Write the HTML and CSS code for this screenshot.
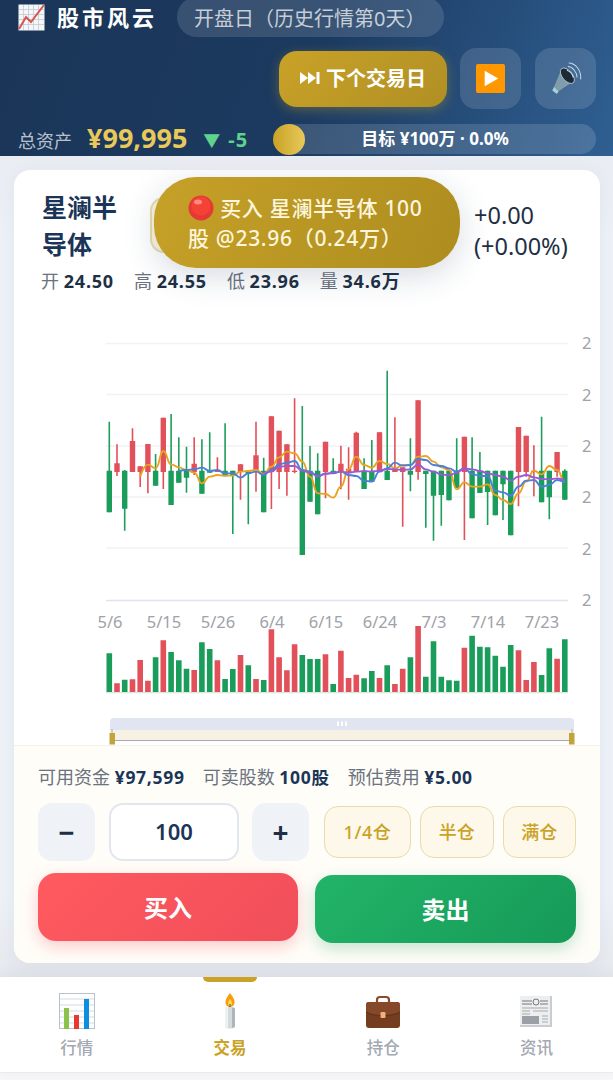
FILE: index.html
```html
<!DOCTYPE html>
<html lang="zh-CN">
<head>
<meta charset="utf-8">
<title>股市风云</title>
<link rel="stylesheet" href="styles.css">
</head>
<body>
<div class="app">
  <header class="top">
    <div class="top-row1">
      <div class="brand">
        <svg class="brand-icon" viewBox="0 0 27 27"><rect x=".5" y=".5" width="26" height="26" fill="#f4f6f8"/><path d="M1 5.500h25M1 10.500h25M1 15.500h25M1 20.500h25M5.500 1v25M10.500 1v25M15.500 1v25M20.500 1v25" stroke="#b9c4cf" stroke-width=".7" fill="none"/><path d="M1 25 8 13 13 18 26 1" stroke="#d9534f" stroke-width="2" fill="none"/></svg>
        <span class="brand-name">股市风云</span>
      </div>
      <div class="day-pill">开盘日（历史行情第0天）</div>
    </div>
    <div class="top-row2">
      <button class="next-btn"><svg class="next-icon" viewBox="0 0 20 12"><path d="M0 0 8 6 0 12ZM8 0 16 6 8 12ZM16.500 0h3v12h-3Z" fill="#fff"/></svg>下个交易日</button>
      <button class="sq-btn"><svg class="play-icon" viewBox="0 0 30 30"><rect width="30" height="30" rx="2" fill="#ff9800"/><path d="M9 7 23 15 9 23Z" fill="#fff"/></svg></button>
      <button class="sq-btn"><svg class="sound-icon" viewBox="0 0 34 36"><path d="M4 27 12 8c5-1 12 5 13 13L9 32Z" fill="#7f9dab"/><ellipse cx="18.500" cy="15" rx="5.500" ry="10" transform="rotate(-40 18.500 15)" fill="#1e2a38" stroke="#a9c3cd"/><path d="M4 27l5 5-2 3-5-4Z" fill="#a9d0d8"/><path d="M18 9c3 1 6 4 7 8M19 5c5 0 10 6 10 12M20 1c7 0 14 8 13 18" stroke="#c9d8e2" stroke-width="1.100" fill="none"/></svg></button>
    </div>
    <div class="top-row3">
      <span class="asset-label">总资产</span>
      <span class="asset-value">¥99,995</span>
      <span class="asset-delta"><span class="delta-arrow">▼</span>-5</span>
      <div class="goal">
        <span class="goal-dot"></span>
        <span class="goal-text">目标 ¥100万 · 0.0%</span>
      </div>
    </div>
  </header>

  <main class="main">
    <section class="card">
      <div class="stock-head">
        <div class="stock-name">星澜半导体</div>
        <div class="stock-tag"></div>
        <div class="stock-change">+0.00<br>(+0.00%)</div>
      </div>
      <div class="ohlc">
        <span class="ohlc-item">开 <b>24.50</b></span>
        <span class="ohlc-item">高 <b>24.55</b></span>
        <span class="ohlc-item">低 <b>23.96</b></span>
        <span class="ohlc-item">量 <b>34.6万</b></span>
      </div>

      <svg class="chart" viewBox="14 330 586 415">
        <path class="grid" d="M106 343.500H568M106 394.500H568M106 446H568M106 497H568M106 548H568"/>
        <path class="grid-base" d="M106 600.500H568"/>
        <g class="axis-y">
          <text x="582" y="349">2</text><text x="582" y="401">2</text><text x="582" y="452">2</text>
          <text x="582" y="503">2</text><text x="582" y="555">2</text><text x="582" y="606">2</text>
        </g>
        <g class="axis-x">
          <text x="110" y="628">5/6</text><text x="164" y="628">5/15</text><text x="218" y="628">5/26</text>
          <text x="272" y="628">6/4</text><text x="326" y="628">6/15</text><text x="380" y="628">6/24</text>
          <text x="434" y="628">7/3</text><text x="488" y="628">7/14</text><text x="542" y="628">7/23</text>
        </g>
        <g transform="translate(0 330) scale(1 .33333)">
          <path class="wick-g" d="M109.300 275V547M124.700 420V602M155.600 372V467M171.100 252V525M178.800 322V458M186.500 350V488M201.900 328V491M209.700 307V428M225.100 280V439M232.800 422V612M248.300 422V583M263.700 383V547M302.300 228V675M310 348V515M317.700 370V553M333.200 385V432M364.100 385V477M371.800 330V455M387.200 122V450M410.400 325V484M425.800 422V593M433.500 422V632M441.300 422V587M449 422V511M456.700 325V473M472.100 322V565M479.900 366V489M487.600 422V585M495.300 422V556M503 422V570M510.700 422V616M541.600 260V517M549.300 422V568M564.800 418V509"/>
          <path class="wick-r" d="M117 343V438M132.500 295V426M140.200 409V471M147.900 342V490M163.300 263V477M194.200 322V435M217.400 382V426M240.500 403V509M256 275V485M271.400 259V537M279.100 302V477M286.900 343V497M294.600 205V430M325.500 335V505M340.900 347V478M348.600 352V509M356.300 305V426M379.500 307V426M394.900 262V426M402.700 412V590M418.100 211V449M464.400 320V630M518.500 291V529M526.200 317V440M533.900 346V499M557.100 366V440"/>
          <path class="body-g" d="M109.300 422V547M124.700 422V536M155.600 422V467M171.100 422V525M178.800 422V458M186.500 422V443M201.900 422V491M209.700 420V428M225.100 422V439M232.800 422V438M248.300 422V430M263.700 422V547M302.300 422V675M310 422V515M317.700 422V553M333.200 422V432M364.100 422V477M371.800 422V455M387.200 422V450M410.400 422V434M425.800 422V432M433.500 422V497M441.300 422V495M449 422V511M456.700 422V473M472.100 422V565M479.900 422V489M487.600 422V486M495.300 422V556M503 422V463M510.700 422V616M541.600 422V517M549.300 422V502M564.800 422V509"/>
          <path class="body-r" d="M117 400V426M132.500 333V426M140.200 409V426M147.900 342V426M163.300 263V426M194.200 401V426M217.400 420V426M240.500 403V426M256 376V426M271.400 259V426M279.100 302V426M286.900 343V426M294.600 422V426M325.500 335V426M340.900 401V426M348.600 416V426M356.300 308V426M379.500 307V426M394.900 415V426M402.700 412V426M418.100 211V426M464.400 320V426M518.500 291V426M526.200 317V426M533.900 422V426M557.100 366V426"/>
          <path class="ma ma-gold" d="M140.200 440S144 404 147.900 404S151.700 415 155.600 415S159.400 363 163.300 363S167.200 403 171.100 403S174.900 412 178.800 412S182.600 420 186.500 420S190.300 428 194.200 428S198 460 201.900 460S205.800 440 209.700 440S213.500 435 217.400 435S221.200 437 225.100 437S228.900 437 232.800 437S236.600 425 240.500 425S244.400 423 248.300 423S252.100 420 256 420S259.800 432 263.700 432S267.500 410 271.400 410S275.200 382 279.100 382S283 365 286.900 365S290.700 370 294.600 370S298.400 395 302.300 395S306.100 440 310 440S313.800 490 317.700 490S321.600 492 325.500 492S329.300 503 333.200 503S337 470 340.900 470S344.700 418 348.600 418S352.400 380 356.300 380S360.200 405 364.100 405S367.900 413 371.800 413S375.600 393 379.500 393S383.300 402 387.200 402S391 415 394.900 415S398.800 405 402.700 405S406.500 405 410.400 405S414.200 380 418.100 380S421.900 378 425.800 378S429.600 395 433.500 395S437.400 412 441.300 412S445.100 420 449 420S452.800 478 456.700 478S460.500 457 464.400 457S468.200 470 472.100 470S476 470 479.900 470S483.700 463 487.600 463S491.400 495 495.300 495S499.100 510 503 510S506.800 522 510.700 522S514.600 490 518.500 490S522.300 455 526.200 455S530 422 533.900 422S537.700 433 541.600 433S545.400 408 549.300 408S553.200 420 557.100 420S560.900 455 564.800 455"/>
          <path class="ma ma-blue" d="M178.800 423S182.600 420 186.500 420S190.300 418 194.200 418S198 413 201.900 413S205.800 423 209.700 423S213.500 420 217.400 420S221.200 430 225.100 430S228.900 430 232.800 430S236.600 443 240.500 443S244.400 430 248.300 430S252.100 425 256 425S259.800 435 263.700 435S267.500 420 271.400 420S275.200 403 279.100 403S283 398 286.900 398S290.700 393 294.600 393S298.400 420 302.300 420S306.100 425 310 425S313.800 440 317.700 440S321.600 430 325.500 430S329.300 430 333.200 430S337 425 340.900 425S344.700 435 348.600 435S352.400 438 356.300 438S360.200 452 364.100 452S367.900 455 371.800 455S375.600 425 379.500 425S383.300 415 387.200 415S391 398 394.900 398S398.800 407 402.700 407S406.500 405 410.400 405S414.200 387 418.100 387S421.900 390 425.800 390S429.600 405 433.500 405S437.400 408 441.300 408S445.100 415 449 415S452.800 425 456.700 425S460.500 415 464.400 415S468.200 432 472.100 432S476 438 479.900 438S483.700 438 487.600 438S491.400 482 495.300 482S499.100 487 503 487S506.800 497 510.700 497S514.600 470 518.500 470S522.300 452 526.200 452S530 450 533.900 450S537.700 470 541.600 470S545.400 465 549.300 465S553.200 450 557.100 450S560.900 455 564.800 455"/>
          <path class="ma ma-purple" d="M263.700 432S267.500 425 271.400 425S275.200 410 279.100 410S283 408 286.900 408S290.700 408 294.600 408S298.400 422 302.300 422S306.100 428 310 428S313.800 438 317.700 438S321.600 432 325.500 432S329.300 428 333.200 428S337 425 340.900 425S344.700 428 348.600 428S352.400 425 356.300 425S360.200 423 364.100 423S367.900 425 371.800 425S375.600 422 379.500 422S383.300 417 387.200 417S391 418 394.900 418S398.800 420 402.700 420S406.500 418 410.400 418S414.200 403 418.100 403S421.900 418 425.800 418S429.600 425 433.500 425S437.400 433 441.300 433S445.100 436 449 436S452.800 428 456.700 428S460.500 415 464.400 415S468.200 418 472.100 418S476 423 479.900 423S483.700 430 487.600 430S491.400 435 495.300 435S499.100 440 503 440S506.800 452 510.700 452S514.600 440 518.500 440S522.300 435 526.200 435S530 442 533.900 442S537.700 447 541.600 447S545.400 448 549.300 448S553.200 445 557.100 445S560.900 450 564.800 450"/>
        </g>
        <path class="vol-base" d="M106 692.500H568"/>
        <g transform="translate(0 590) scale(1 .33333)">
          <path class="vol-g" d="M109.300 190V306M124.700 269V306M155.600 202V306M171.100 186V306M178.800 211V306M186.500 236V306M201.900 157V306M209.700 177V306M225.100 267V306M232.800 237V306M248.300 226V306M263.700 270V306M302.300 195V306M310 207V306M317.700 207V306M333.200 282V306M364.100 265V306M371.800 243V306M387.200 226V306M410.400 202V306M425.800 260V306M433.500 154V306M441.300 260V306M449 271V306M456.700 272V306M472.100 137V306M479.900 170V306M487.600 172V306M495.300 197V306M503 230V306M510.700 165V306M541.600 255V306M549.300 175V306M564.800 148V306"/>
          <path class="vol-r" d="M117 280V306M132.500 268V306M140.200 210V306M147.900 272V306M163.300 151V306M194.200 240V306M217.400 211V306M240.500 195V306M256 267V306M271.400 118V306M279.100 202V306M286.900 241V306M294.600 163V306M325.500 193V306M340.900 182V306M348.600 264V306M356.300 254V306M379.500 264V306M394.900 282V306M402.700 236V306M418.100 108V306M464.400 173V306M518.500 181V306M526.200 270V306M533.900 216V306M557.100 206V306"/>
        </g>
        <path class="zoom-track" d="M110 730V722a4 4 0 0 1 4-4H570a4 4 0 0 1 4 4V730Z"/>
        <rect class="zoom-fill" x="110" y="730" width="464" height="10.500"/>
        <path class="zoom-line" d="M110 740.500H574"/>
        <path class="zoom-grip" d="M338 721.500V726M342 721.500V726M346 721.500V726"/>
        <path class="zoom-stem" d="M112 729V733M572 729V733"/>
        <rect class="zoom-handle" x="109.500" y="733" width="5.500" height="11.500"/>
        <rect class="zoom-handle" x="569" y="733" width="5.500" height="11.500"/>
      </svg>

      <section class="trade">
        <div class="funds">
          <span class="fund">可用资金 <b>¥97,599</b></span>
          <span class="fund">可卖股数 <b>100股</b></span>
          <span class="fund">预估费用 <b>¥5.00</b></span>
        </div>
        <div class="qty-row">
          <button class="step">−</button>
          <div class="qty">100</div>
          <button class="step">+</button>
          <button class="pos pos-wide">1/4仓</button>
          <button class="pos">半仓</button>
          <button class="pos">满仓</button>
        </div>
        <div class="actions">
          <button class="act act-buy">买入</button>
          <button class="act act-sell">卖出</button>
        </div>
      </section>

      <div class="toast"><svg class="toast-dot" viewBox="0 0 26 26"><circle cx="13" cy="13" r="12.500" fill="#e53935"/><circle cx="13" cy="11" r="9.500" fill="#f44336"/><ellipse cx="10" cy="7" rx="4" ry="2.500" fill="#ff8a80"/></svg> 买入 星澜半导体 100股 @23.96（0.24万）</div>
    </section>
  </main>

  <nav class="tabs">
    <div class="tab">
      <svg class="tab-icon" viewBox="0 0 36 36"><rect x=".5" y=".5" width="35" height="35" fill="#fff" stroke="#b8c2cc"/><path d="M1 6h34M1 12h34M1 18h34M1 24h34M1 30h34" stroke="#d5dbe0"/><rect x="5" y="15" width="5" height="21" fill="#8bc34a"/><rect x="15" y="22" width="5" height="14" fill="#e53935"/><rect x="25" y="6" width="5" height="30" fill="#0d8ee0"/></svg>
      <span>行情</span>
    </div>
    <div class="tab tab-on">
      <svg class="tab-icon" viewBox="0 0 36 36"><path d="M18 0c3 4 4.500 6 4.500 9 0 3-2 5-4.500 5s-4.500-2-4.500-5c0-3 1.500-5 4.500-9Z" fill="#f59e0b"/><path d="M18 6c1.500 2 2 3 2 4.500 0 1.500-1 2.500-2 2.500s-2-1-2-2.500c0-1.500.5-2.500 2-4.500Z" fill="#ffd54f"/><rect x="17.500" y="11" width="1" height="4" fill="#555"/><path d="M13 15c3-1.500 7-1.500 10 0v19c-3 2-7 2-10 0Z" fill="#d5dadd"/><path d="M13 15c1-.5 2-1 3-1v21c-1 0-2-.500-3-1Z" fill="#eef1f2"/><path d="M20 14.500l3 .5v19l-3 1Z" fill="#aeb6ba"/></svg>
      <span>交易</span>
    </div>
    <div class="tab">
      <svg class="tab-icon" viewBox="0 0 36 36"><path d="M12 10V7a3 3 0 0 1 3-3h6a3 3 0 0 1 3 3v3" stroke="#8a4b2a" stroke-width="2.200" fill="none"/><rect x="1" y="9" width="34" height="26" rx="3" fill="#743d20"/><path d="M1 12a3 3 0 0 1 3-3h28a3 3 0 0 1 3 3v7c-5 3-11 3.500-17 3.500S6 22 1 19Z" fill="#85492a"/><path d="M1 19c5 3 11 3.500 17 3.500S30 22 35 19" stroke="#5a2f18" fill="none"/><rect x="15.500" y="19" width="5" height="6" rx="1" fill="#f0b27a"/></svg>
      <span>持仓</span>
    </div>
    <div class="tab">
      <svg class="tab-icon" viewBox="0 0 36 36"><rect x="2" y="3" width="32" height="31" fill="#c9cdd1"/><rect x="2" y="3" width="30" height="29" fill="#eceef0"/><path d="M4 8h10M22 8h8M4 11h10M22 11h8" stroke="#777" stroke-width="1.200"/><circle cx="18" cy="9" r="3" fill="none" stroke="#777"/><path d="M4 15h26M4 18h8M15 18h15M4 21h8" stroke="#aaa"/><rect x="4" y="23" width="17" height="8" fill="#9aa0a5"/><path d="M24 23h6M24 26h6M24 29h6" stroke="#aaa"/></svg>
      <span>资讯</span>
    </div>
  </nav>
  <div class="home-bar"></div>
</div>
</body>
</html>
```
FILE: styles.css
```css
* { box-sizing: border-box; }
html, body { margin: 0; padding: 0; }
body {
  font-family: "Noto Sans", "Noto Sans CJK SC", "DejaVu Sans", sans-serif;
  background: #f6f6f8;
  color: #1a2f47;
  overflow: hidden;
  text-spacing-trim: space-all;
}
button { font-family: inherit; border: 0; padding: 0; cursor: pointer; }
.app { width: 613px; height: 1080px; display: flex; flex-direction: column; }

/* header */
.top {
  height: 156px;
  flex: none;
  padding: 0 17px 0 18px;
  background: linear-gradient(110deg, #1a3557 0%, #1c3a60 50%, #2f5f92 100%);
  color: #fff;
}
.top-row1 { display: flex; align-items: center; height: 37px; }
.brand { display: flex; align-items: center; width: 159px; margin-top: -3px; }
.brand-icon { width: 27px; height: 27px; margin-right: 12px; }
.brand-name { font-size: 22px; font-weight: 700; letter-spacing: 3px; line-height: 1; }
.day-pill {
  width: 267px; height: 40px; margin-top: -3px;
  padding-left: 17px;
  display: flex; align-items: center;
  font-size: 20px; color: rgba(255,255,255,.72);
  background: rgba(255,255,255,.13);
  border-radius: 20px;
  white-space: nowrap;
}
.top-row2 { display: flex; justify-content: flex-end; align-items: center; gap: 14px; margin-top: 11px; height: 61px; }
.next-btn {
  width: 168px; height: 56px;
  margin-right: -1px;
  padding-bottom: 2px;
  display: flex; align-items: center; justify-content: center; gap: 6px;
  font-size: 20px; font-weight: 700; color: #fff;
  background: linear-gradient(135deg, #c9a227, #b08f24);
  border-radius: 18px;
  box-shadow: 0 3px 12px rgba(201,162,39,.35);
}
.next-icon { width: 20px; height: 12px; }
.sq-btn {
  width: 61px; height: 61px;
  display: flex; align-items: center; justify-content: center;
  background: rgba(255,255,255,.13);
  border-radius: 16px;
}
.play-icon { width: 29px; height: 29px; }
.sound-icon { width: 32px; height: 33px; }
.top-row3 { display: flex; align-items: center; height: 30px; margin-top: 15px; }
.asset-label { font-size: 18px; color: rgba(255,255,255,.7); width: 69px; margin-top: 1px; }
.asset-value { font-size: 27px; font-weight: 700; color: #e8c95a; line-height: 1; margin-top: -4px; }
.asset-delta { font-size: 20px; font-weight: 700; color: #5fd38d; margin-left: 16px; letter-spacing: 1px; }
.delta-arrow { margin-right: 7px; font-size: 17px; }
.goal {
  position: relative;
  margin-left: auto; width: 322px; height: 30px;
  display: flex; align-items: center; justify-content: center;
  background: rgba(255,255,255,.14);
  border-radius: 15px;
}
.goal-dot {
  position: absolute; left: -1px; top: 0;
  width: 32px; height: 31px; border-radius: 50%;
  background: linear-gradient(90deg, #c9a227, #e8c95a);
}
.goal-text { font-size: 17px; font-weight: 700; color: #fff; margin-top: -3px; }

/* main */
.main {
  height: 821px;
  flex: none;
  padding: 14px 13px 14px 14px;
  background: linear-gradient(180deg, #e9ecf2 0%, #eef2f8 10%, #eef2f8 90%, #e6e9ee 100%);
}
.card {
  position: relative;
  height: 793px;
  display: flex; flex-direction: column;
  background: #fff;
  border-radius: 16px;
  box-shadow: 0 4px 20px rgba(26,53,87,.06);
  overflow: hidden;
}
.stock-head { display: flex; padding: 19px 0 0 28px; height: 94px; }
.stock-name { width: 82px; font-size: 25px; font-weight: 700; line-height: 37px; color: #1a3557; }
.stock-tag {
  width: 150px; height: 56px; margin: 8px 0 0 26px;
  background: #fbf5e2; border: 2px solid #e8dcae; border-radius: 14px;
}
.stock-change { margin-left: 174px; font-size: 23.500px; line-height: 31px; color: #1f3044; margin-top: 11px; white-space: nowrap; }
.ohlc { display: flex; gap: 20px; padding-left: 27px; height: 24px; margin-top: 5px; font-size: 18px; line-height: 24px; color: #6b7280; white-space: nowrap; }
.ohlc b { color: #1f3044; letter-spacing: .8px; }

.chart { display: block; width: 586px; height: 415px; margin-top: 37px; flex: none; }
.grid { stroke: #f1f2f5; stroke-width: 1.500; fill: none; }
.grid-base { stroke: #e1e3ec; stroke-width: 1.500; fill: none; }
.axis-y text, .axis-x text { font-size: 16.500px; fill: #a0a2a8; }
.axis-x text { text-anchor: middle; }
.wick-g, .wick-r, .body-g, .body-r, .vol-g, .vol-r { fill: none; }
.wick-g { stroke: #1f9d5c; stroke-width: 1.600; }
.wick-r { stroke: #e2505a; stroke-width: 1.600; }
.body-g { stroke: #1a9d5a; stroke-width: 5.400; }
.body-r { stroke: #e2505a; stroke-width: 5.400; }
.vol-g { stroke: #1a9d5a; stroke-width: 5.600; }
.vol-r { stroke: #e2505a; stroke-width: 5.600; }
.vol-base { stroke: #d8eadf; stroke-width: 1.500; fill: none; }
.ma { fill: none; stroke-width: 1.900; stroke-linejoin: round; vector-effect: non-scaling-stroke; }
.ma-gold { stroke: #eaa31d; }
.ma-blue { stroke: #4a7fdc; }
.ma-purple { stroke: #9a5ad8; }
.zoom-track { fill: #e0e5f1; }
.zoom-fill { fill: #f6f1e2; }
.zoom-line { stroke: #a4acb0; stroke-width: 1; }
.zoom-grip { stroke: #fff; stroke-width: 2; fill: none; }
.zoom-stem { stroke: #a4acb0; stroke-width: 1; fill: none; }
.zoom-handle { fill: #c2a33c; }

/* trade */
.trade {
  flex: 1;
  padding: 19px 24px 0;
  background: #fffdf8;
  border-top: 1px solid #f3f1ea;
}
.funds { display: flex; gap: 18px; font-size: 18px; line-height: 24px; color: #6b7280; white-space: nowrap; }
.funds b { color: #1a3557; letter-spacing: .7px; font-size: 17.500px; }
.qty-row { display: flex; align-items: center; height: 58px; margin-top: 14px; }
.step {
  width: 57px; height: 58px; flex: none;
  font-size: 28px; font-weight: 700; color: #1f3044;
  background: #eff2f6; border-radius: 14px;
}
.qty {
  width: 130px; height: 58px; margin: 0 13px 0 14px; flex: none;
  padding-bottom: 2px;
  display: flex; align-items: center; justify-content: center;
  font-size: 22px; font-weight: 600; color: #1a3557;
  background: #fff; border: 2px solid #e2e6ef; border-radius: 14px;
}
.pos {
  width: 73.500px; height: 52px; margin-left: 9px; flex: none;
  padding-bottom: 2px;
  font-size: 18px; font-weight: 500; color: #c9a227;
  background: #fdf8e9; border: 1.500px solid #e8dcae; border-radius: 14px;
}
.pos-wide { width: 87px; margin-left: 15px; letter-spacing: .6px; }
.actions { display: flex; gap: 17px; margin-top: 12px; align-items: flex-start; }
.act { width: 260px; height: 68px; flex: none; padding-bottom: 2px; font-size: 24px; font-weight: 700; color: #fff; border-radius: 18px; }
.act-buy { background: linear-gradient(135deg, #ff5a5f, #f04e5a); box-shadow: 0 6px 16px rgba(240,78,90,.28); }
.act-sell { margin-top: 2px; width: 261px; background: linear-gradient(135deg, #22b468, #169a58); box-shadow: 0 6px 16px rgba(26,157,90,.25); }

.toast {
  position: absolute; left: 140px; top: 7px;
  width: 306px; height: 91px;
  padding: 16px 30px 0 34px;
  font-size: 21px; font-weight: 500; letter-spacing: .7px; line-height: 30px; color: #fdf6dc;
  background: linear-gradient(110deg, #c6a128, #ad8d1f);
  border-radius: 42px;
  box-shadow: 0 8px 32px rgba(26,53,87,.18);
}
.toast-dot { width: 26px; height: 26px; vertical-align: -5px; }

/* tabs */
.tabs {
  position: relative;
  height: 95px; flex: none;
  display: grid; grid-template-columns: repeat(4, 1fr);
  background: #fff;
  box-shadow: 0 -3px 14px rgba(26,53,87,.06);
}
.tab { display: flex; flex-direction: column; align-items: center; padding-top: 16px; font-size: 16.500px; font-weight: 500; color: #a3a8b2; line-height: 24px; }
.tab-icon { width: 36px; height: 36px; margin-bottom: 7px; }
.tab-on { color: #c9a227; position: relative; font-weight: 700; }
.tab-on::before {
  content: ""; position: absolute; top: 0; left: 50%; margin-left: -27px;
  width: 54px; height: 5px;
  background: #c9a227; border-radius: 0 0 6px 6px;
}
.home-bar { flex: 1; background: #f6f6f8; border-top: 1px solid #eeeef0; }
```
